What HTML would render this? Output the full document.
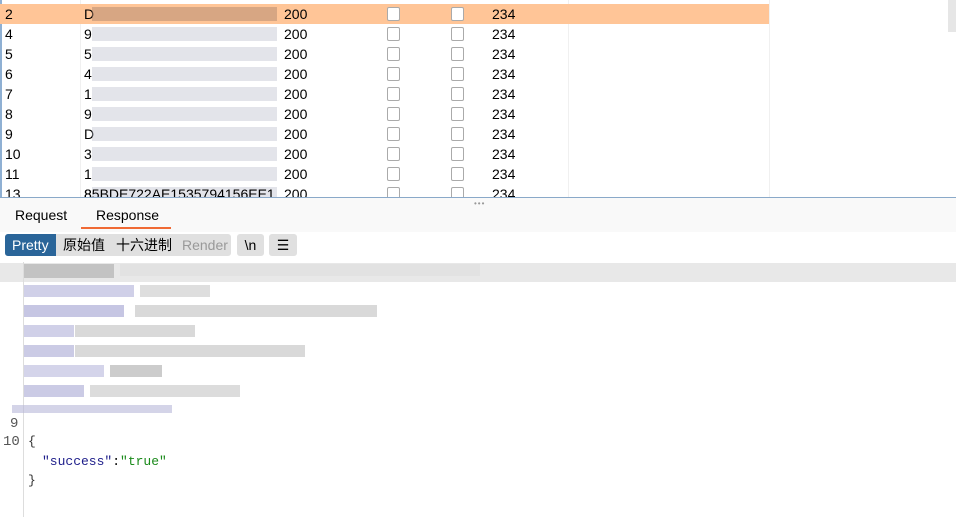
<!DOCTYPE html>
<html><head><meta charset="utf-8"><style>
*{margin:0;padding:0;box-sizing:border-box}
body{width:956px;height:517px;overflow:hidden;background:#fff;font-family:"Liberation Sans","Noto Sans CJK SC",sans-serif;font-size:14px;color:#000;position:relative}
.a{position:absolute}
.row{position:absolute;left:0;width:769px;height:20px;line-height:20px}
.cb{position:absolute;width:13px;height:14px;border:1px solid #aaa;border-radius:2px;background:#fff;top:3px}
.blk{position:absolute;height:7px;opacity:.6}
.mono{font-family:"Liberation Mono","DejaVu Sans Mono",monospace;font-size:13px}
</style></head><body>
<div class="a" style="left:0;top:0;width:2px;height:197px;background:#8fb0d3"></div>
<div class="a" style="left:80px;top:0;width:1px;height:197px;background:#f0f0f0"></div>
<div class="a" style="left:568px;top:0;width:1px;height:197px;background:#f0f0f0"></div>
<div class="a" style="left:769px;top:0;width:1px;height:197px;background:#f0f0f0"></div>
<div class="a" style="left:948px;top:0;width:8px;height:32px;background:#e6e6e6"></div>

<div class="row" style="top:4px;background:#ffc597"></div>
<div id="rows"></div>
<script>
var ids=['2','4','5','6','7','8','9','10','11','13'],f=['D','9','5','4','1','9','D','3','1','8'];
var h='';
for(var i=0;i<10;i++){var t=4+i*20;
h+='<div class="a" style="left:5px;top:'+t+'px;line-height:20px">'+ids[i]+'</div>';
h+='<div class="a" style="left:84px;top:'+t+'px;line-height:20px">'+f[i]+'</div>';
h+='<div class="a" style="left:284px;top:'+t+'px;line-height:20px">200</div>';
h+='<div class="cb" style="left:387px;top:'+(t+3)+'px"></div><div class="cb" style="left:451px;top:'+(t+3)+'px"></div>';
h+='<div class="a" style="left:492px;top:'+t+'px;line-height:20px">234</div>';
var c=i==0?'#b08870':'#b8bccb';
h+='<div class="a" style="left:92px;top:'+(t+3)+'px;width:185px;height:14px;background:'+c+';opacity:'+(i==0?.5:.4)+'"></div>';
}
h+='<div class="a" style="left:84px;top:184px;line-height:20px">85BDE722AE1535794156EE1</div>';
document.getElementById('rows').innerHTML=h;
</script>
<div class="a" style="left:0;top:197px;width:956px;height:1px;background:#8aa9c9"></div>
<div class="a" style="left:0;top:198px;width:956px;height:34px;background:#f9f9f9"></div>
<div class="a" style="left:474px;top:199px;color:#999;font-size:8px;letter-spacing:1px">•••</div>
<div class="a" style="left:15px;top:207px">Request</div>
<div class="a" style="left:96px;top:207px">Response</div>
<div class="a" style="left:81px;top:227px;width:90px;height:2px;background:#f06a35"></div>

<div class="a" style="left:5px;top:234px;width:226px;height:22px;background:#e0e0e0;border-radius:3px"></div>
<div class="a" style="left:5px;top:234px;width:51px;height:22px;background:#2a6599;border-radius:3px 0 0 3px;color:#fff;line-height:22px;padding-left:7px">Pretty</div>
<div class="a" style="left:63px;top:234px;line-height:22px">原始值</div>
<div class="a" style="left:116px;top:234px;line-height:22px">十六进制</div>
<div class="a" style="left:182px;top:234px;line-height:22px;color:#999">Render</div>
<div class="a" style="left:237px;top:234px;width:27px;height:22px;background:#e0e0e0;border-radius:3px;line-height:22px;text-align:center">\n</div>
<div class="a" style="left:269px;top:234px;width:28px;height:22px;background:#e0e0e0;border-radius:3px;line-height:22px;text-align:center">☰</div>

<div class="a" style="left:0;top:263px;width:956px;height:19px;background:#e8e8e8"></div>
<div class="a" style="left:23px;top:262px;width:1px;height:255px;background:#ddd"></div>
<div class="blk" style="left:24px;top:264px;width:90px;height:14px;background:#aaa"></div>
<div class="blk" style="left:120px;top:264px;width:360px;height:12px;background:#ddd"></div>
<div class="blk" style="left:24px;top:285px;width:110px;height:12px;background:#b0b0d8"></div>
<div class="blk" style="left:140px;top:285px;width:70px;height:12px;background:#c8c8c8"></div>
<div class="blk" style="left:24px;top:305px;width:100px;height:12px;background:#a0a0d0"></div>
<div class="blk" style="left:135px;top:305px;width:242px;height:12px;background:#c0c0c0"></div>
<div class="blk" style="left:24px;top:325px;width:50px;height:12px;background:#b0b0d8"></div>
<div class="blk" style="left:75px;top:325px;width:120px;height:12px;background:#c0c0c0"></div>
<div class="blk" style="left:24px;top:345px;width:50px;height:12px;background:#a8a8d4"></div>
<div class="blk" style="left:75px;top:345px;width:230px;height:12px;background:#c0c0c0"></div>
<div class="blk" style="left:24px;top:365px;width:80px;height:12px;background:#b8b8dc"></div>
<div class="blk" style="left:110px;top:365px;width:52px;height:12px;background:#aaa"></div>
<div class="blk" style="left:24px;top:385px;width:60px;height:12px;background:#a8a8d4"></div>
<div class="blk" style="left:90px;top:385px;width:150px;height:12px;background:#c4c4c4"></div>
<div class="blk" style="left:12px;top:405px;width:160px;height:8px;background:#b8b8d8"></div>
<div class="a mono" style="left:10px;top:415px;line-height:18px;color:#555;font-size:14px">9</div>
<div class="a mono" style="left:3px;top:433px;line-height:18px;color:#555;font-size:14px">10</div>
<div class="a mono" style="left:28px;top:433px;line-height:18px;color:#333">{</div>
<div class="a mono" style="left:42px;top:453px;line-height:18px"><span style="color:#1d1d8a">"success"</span>:<span style="color:#1a8a1a">"true"</span></div>
<div class="a mono" style="left:28px;top:472px;line-height:18px;color:#333">}</div>
</body></html>
